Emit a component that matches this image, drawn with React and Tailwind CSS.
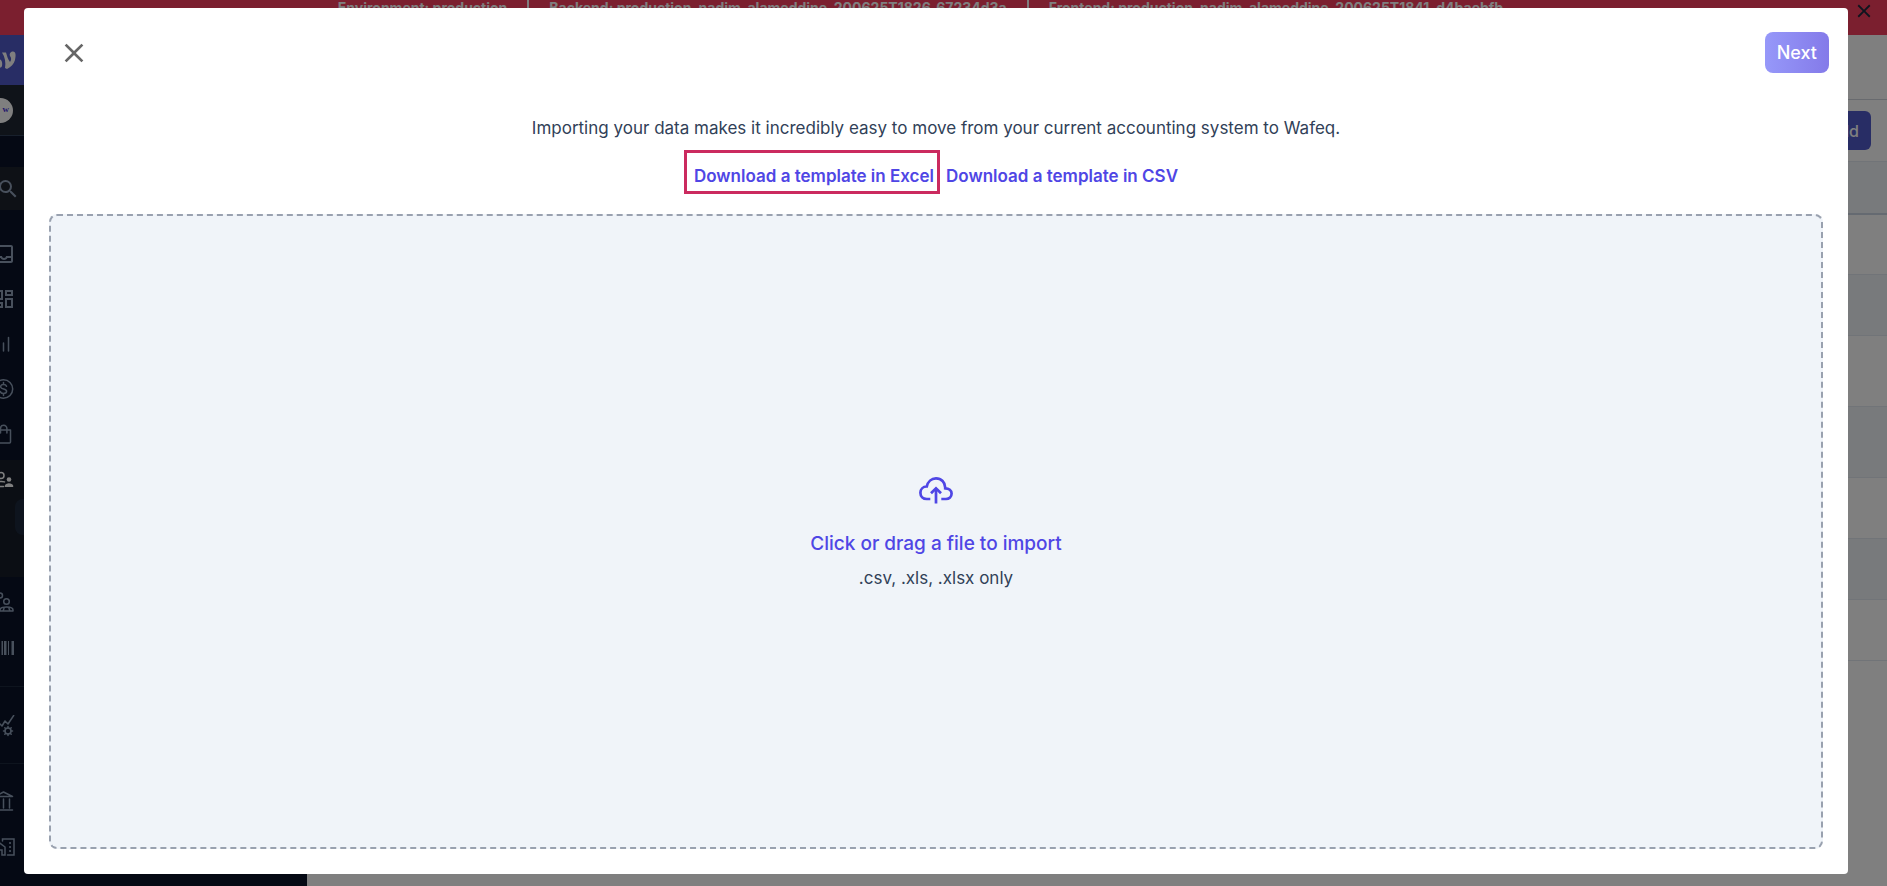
import {
  MdClose,
  MdOutlineInbox,
  MdOutlineDashboard,
  MdSearch,
} from 'react-icons/md';

const deployments = [
  'Environment: production',
  'Backend: production_nadim_alameddine_200625T1826_67234d3a',
  'Frontend: production_nadim_alameddine_200625T1841_d4baebfb',
];

const rows = [
  { id: 1, className: 'h-[61px]' },
  { id: 2, className: 'h-[61px] bg-slate-100' },
  { id: 3, className: 'h-[71px]' },
  { id: 4, className: 'h-[71px] bg-slate-100' },
  { id: 5, className: 'h-[61px]' },
  { id: 6, className: 'h-[61px] bg-slate-100' },
  { id: 7, className: 'h-[61px]' },
];

const Icon = ({ children }) => (
  <svg
    className="size-6"
    viewBox="0 0 24 24"
    fill="none"
    stroke="currentColor"
    strokeWidth="1.5"
    strokeLinecap="round"
    strokeLinejoin="round"
  >
    {children}
  </svg>
);

const ReportsIcon = () => (
  <Icon>
    <path d="M6 13v6M11.500 11v8M16.500 5.500v13.500" />
  </Icon>
);

const SalesIcon = () => (
  <Icon>
    <circle cx="11.500" cy="12" r="9.2" />
    <path d="M14.500 9.2C14.100 8 13 7.500 11.500 7.500c-1.700 0-2.900.8-2.900 2.200 0 3.200 6 1.500 6 4.600 0 1.400-1.300 2.200-3.100 2.200-1.700 0-2.900-.7-3.200-2M11.500 5.500v2M11.500 16.500v2" />
  </Icon>
);

const PurchasesIcon = () => (
  <Icon>
    <path d="M3.500 8h15v12a1 1 0 0 1-1 1h-13a1 1 0 0 1-1-1zM8.500 11V6.500a3.200 3.200 0 0 1 6.400 0V11" />
  </Icon>
);

const ContactsIcon = () => (
  <Icon>
    <circle cx="9" cy="7.500" r="3" />
    <path d="M2 18.500v-1c0-2.500 4-4 7.500-4 1 0 2 .1 3 .4M2 18.500h9.500" />
    <circle cx="17" cy="11.500" r="2.300" fill="currentColor" stroke="none" />
    <path d="M12.800 19v-1.200c0-1.600 2.600-2.600 4.200-2.600s4.200 1 4.200 2.600V19z" fill="currentColor" stroke="none" />
  </Icon>
);

const PayrollIcon = () => (
  <Icon>
    <circle cx="8" cy="4.500" r="2.500" />
    <circle cx="14.500" cy="10.500" r="2.800" />
    <path d="M8 20v-1c0-2 3.500-3 6.500-3s6.500 1 6.500 3v1zM11 20l1-2.500M18 20l-1-2.500M1 15v-1c0-2 3-3 6-3" />
  </Icon>
);

const InventoryIcon = () => (
  <svg className="size-6" viewBox="0 0 24 24" fill="currentColor">
    <path d="M0 5h2v14H0zM3 5h1v14H3zM5 5h3v14H5zM9.500 5h1.500v14H9.500zM12 5h2.500v14H12zM16 5h1v14h-1zM19.500 5H22v14h-2.500z" />
  </svg>
);

const AnalyticsIcon = () => (
  <Icon>
    <path d="M1 17 7 8l3 3 3-5 3 3L22 0" strokeLinecap="butt" />
    <circle cx="16" cy="16" r="3" />
    <path d="M16 11.500V13M16 19v1.500M11.500 16H13M19 16h1.500M12.800 12.800l1 1M18.200 18.200l1 1M19.200 12.800l-1 1M13.800 18.200l-1 1" />
  </Icon>
);

const BankIcon = () => (
  <Icon>
    <path d="M3 7.500 11.500 3l9 4.500zM6 10v9M11.500 10v9M17.500 10v9M3 21h17.500" />
  </Icon>
);

const PropertyIcon = () => (
  <Icon>
    <path d="M10.500 6V4H22v16h-6.500M1.500 20v-8L7 7.500l6 4.500v8h-3v-5H6v5z" strokeLinejoin="miter" />
    <path d="M18 8h.1M18 12h.1M18 16h.1" strokeWidth="2" />
  </Icon>
);

const CloudUploadIcon = () => (
  <svg
    className="h-[27px] w-[34px]"
    viewBox="0 0 34 27"
    fill="none"
    stroke="currentColor"
    strokeWidth="2.700"
  >
    <path d="M11.300 22H7.800C4 22 1.400 19.300 1.400 15.800c0-3.500 2.600-6.200 6.400-6.300C8.800 4.700 12.400 1.400 17 1.400c5.300 0 9.200 4 9.200 9.100v.8c3.800.1 6.400 2.200 6.400 5.300 0 3.200-2.400 5.400-5.600 5.400h-4.700" />
    <path d="M17 26.500V12" />
    <path d="m12 16.300 5-5 5 5" />
  </svg>
);

const Logo = () => (
  <svg className="h-5 w-8" viewBox="0 0 32 20" fill="currentColor">
    <path d="M4 2h4c1 4 2 7 4 10l3-3 2 1c1.500 2 1.500 5 .5 7L14 19h-4C10 12 8 6 4 2z" />
    <path d="M18 2.500h4c1 3.500 2 7 4 9.500 1.500-2 1.500-4 0-6-1-2.500 1-4.500 3-4.500 3 0 3 4 2 8.500-1 4-4 7-8 9l-2-1c1-5 0-11-3-15.500z" />
  </svg>
);

const Sidebar = () => (
  <nav className="flex w-[331px] shrink-0 flex-col bg-[#0a1329] text-slate-400">
    <div className="flex h-[50px] items-center bg-[#505bcb] px-2 text-white">
      <Logo />
    </div>
    <div className="flex h-[51px] items-center border-b border-slate-700 bg-[#1f2733] px-3">
      <span className="flex size-[25px] items-center justify-end rounded-full bg-white pr-1 font-['Liberation_Serif',serif] text-[9px] font-bold text-indigo-700">
        w
      </span>
    </div>
    <div className="mt-[31px] flex h-[43px] items-center bg-[#1d222c] px-5">
      <MdSearch className="size-6" />
    </div>
    <div className="mt-8 flex flex-col gap-[21px] px-4">
      <MdOutlineInbox className="size-6" />
      <MdOutlineDashboard className="size-6" />
      <ReportsIcon />
      <SalesIcon />
      <PurchasesIcon />
    </div>
    <div className="mt-[14px] h-[117px] bg-[#161c28] px-4 pt-2 text-white">
      <ContactsIcon />
      <div className="mt-[7px] ml-[23px] h-9 rounded-lg bg-slate-800" />
    </div>
    <div className="mt-[14px] flex flex-col gap-[21px] px-4">
      <PayrollIcon />
      <InventoryIcon />
    </div>
    <div className="mt-[26px] border-y border-slate-800 px-4 pt-7 pb-6">
      <AnalyticsIcon />
    </div>
    <div className="mt-[25px] flex flex-col gap-[22px] px-4">
      <BankIcon />
      <PropertyIcon />
    </div>
  </nav>
);

const ContactsPage = () => (
  <main className="min-w-0 flex-1 bg-white">
    <div className="h-[65px] border-b border-gray-300" />
    <div className="flex h-[61px] items-center justify-end px-4">
      <button className="h-[39px] rounded-md bg-[#505bcb] px-3 text-base font-medium text-white">
        Add
      </button>
    </div>
    <table className="w-full border-collapse">
      <thead>
        <tr className="h-[52px] border-t border-b-2 border-t-slate-200 border-b-slate-300 bg-slate-100">
          <th />
        </tr>
      </thead>
      <tbody>
        {rows.map((row) => (
          <tr key={row.id} className={`border-b border-slate-200 ${row.className}`}>
            <td />
          </tr>
        ))}
      </tbody>
    </table>
  </main>
);

const ImportDialog = () => (
  <div className="fixed inset-0 flex bg-black/50 pt-2 pr-[39px] pb-3 pl-6">
    <div
      role="dialog"
      aria-label="Import data"
      className="flex flex-1 flex-col rounded bg-white px-[25px] pb-[25px]"
    >
      <div className="-mr-[6px] flex items-center justify-between pt-6">
        <button aria-label="Close" className="ml-[9px] text-[#666]">
          <MdClose className="size-8" />
        </button>
        <button className="h-[41px] rounded-lg bg-linear-to-r from-[#9698f9] to-[#847ae9] px-3 text-lg font-medium text-white">
          Next
        </button>
      </div>

      <div className="mt-[41px] flex flex-col items-center gap-5 text-[17px] leading-7 text-slate-700">
        <p>
          Importing your data makes it incredibly easy to move from your current accounting system
          to Wafeq.
        </p>
        <div className="flex gap-3 font-semibold text-[#4f46e5]">
          <a href="#excel" className="relative">
            Download a template in Excel
            <span className="absolute -top-3 -right-1.5 -bottom-1 -left-2.5 border-3 border-[#cb2a5f]" />
          </a>
          <a href="#csv">Download a template in CSV</a>
        </div>
      </div>

      <label className="mt-6 flex flex-1 cursor-pointer flex-col items-center justify-center rounded-lg border-2 border-dashed border-gray-400 bg-[#f0f4f9] pt-1.5 text-[#4f46e5]">
        <CloudUploadIcon />
        <span className="mt-[26px] text-[19px] leading-7 font-medium">
          Click or drag a file to import
        </span>
        <span className="mt-1.5 text-[17px] leading-7 text-slate-700">.csv, .xls, .xlsx only</span>
        <input type="file" accept=".csv,.xls,.xlsx" className="sr-only" />
      </label>
    </div>
  </div>
);

const App = () => {
  return (
    <div className="h-screen overflow-hidden font-['Inter',sans-serif]">
      <div className="-ml-6 flex h-full flex-col">
        <header className="flex h-[35px] shrink-0 items-start bg-[#f63f5e] pr-3 text-sm leading-4 font-bold text-white">
          <div className="flex flex-1 justify-center divide-x-2 divide-white pl-3">
            {deployments.map((item) => (
              <span key={item} className="px-5">
                {item}
              </span>
            ))}
          </div>
          <button aria-label="Dismiss" className="text-slate-800">
            <MdClose className="size-[22px]" />
          </button>
        </header>
        <div className="flex min-h-0 flex-1">
          <Sidebar />
          <ContactsPage />
        </div>
      </div>
      <ImportDialog />
    </div>
  );
};

export default App;
